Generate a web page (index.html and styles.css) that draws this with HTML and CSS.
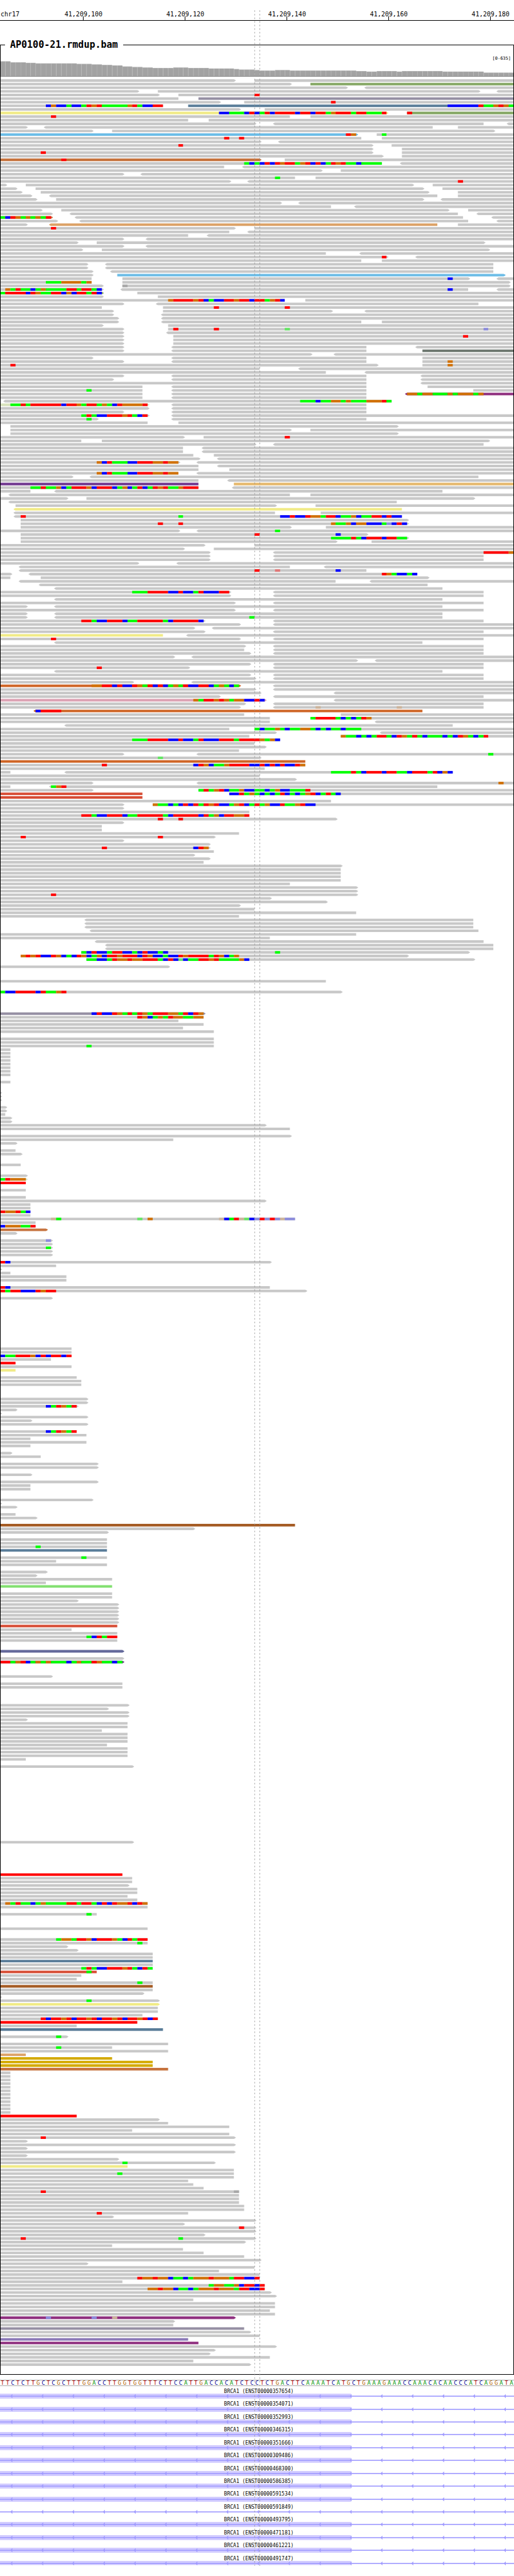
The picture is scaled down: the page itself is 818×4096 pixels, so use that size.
FILE: index.html
```html
<!DOCTYPE html>
<html lang="en">
<head>
<meta charset="utf-8">
<meta name="viewport" content="width=device-width, initial-scale=1">
<title>AP0100-21.rmdup.bam – chr17</title>
<link rel="stylesheet" href="styles.css">
</head>
<body>
<main class="browser">
  <header class="ruler">
    <span class="ruler-chrom">chr17</span>
    <span class="ruler-tick">41,209,100</span>
    <span class="ruler-tick">41,209,120</span>
    <span class="ruler-tick">41,209,140</span>
    <span class="ruler-tick">41,209,160</span>
    <span class="ruler-tick">41,209,180</span>
  </header>

  <fieldset class="track">
    <legend class="track-title">AP0100-21.rmdup.bam</legend>
    <div class="track-range">[0-635]</div>
    <svg class="track-plot" id="plot" viewBox="1 118.5 998 4494.5" preserveAspectRatio="none" role="img" aria-label="Coverage and aligned reads"></svg>
  </fieldset>

  <div class="sequence" id="sequence"></div>
  <section class="genes" id="genes"></section>

  <svg class="guides" viewBox="0 0 1000 5005" preserveAspectRatio="none" aria-hidden="true">
    <path d="M495.5 20V4985M505.5 20V4985" stroke="#969696" stroke-width="1" stroke-dasharray="3 4"/>
  </svg>
</main>
<script src="tracks.js"></script>
</body>
</html>
```

FILE: styles.css
```css
* {
  box-sizing: border-box;
}

body {
  margin: 0;
  background: #fff;
  color: #000;
  font-family: "DejaVu Sans Mono", monospace;
}

.browser {
  position: relative;
  padding-bottom: 13px;
  overflow: hidden;
}

.ruler {
  display: grid;
  grid-template-columns: 6.35% repeat(5, 19.8%);
  padding-top: 16px;
  overflow: hidden;
  border-bottom: 1px solid #000;
  font-size: 10px;
  line-height: 13px;
}

.ruler-chrom {
  padding-left: 1px;
}

.ruler-tick {
  text-align: center;
}

.ruler-tick::after {
  content: "";
  display: block;
  width: 1px;
  height: 6px;
  margin: -3px auto 0;
  background: #000;
}

.track {
  min-width: 0;
  margin: 28px 0 0;
  padding: 0;
  border: 1px solid #000;
}

.track-title {
  margin-left: 7px;
  padding: 0 8px;
  font-size: 15px;
  font-weight: bold;
  line-height: 20px;
}

.track-range {
  padding: 8px 4px 0 0;
  font-size: 7px;
  line-height: 8px;
  text-align: right;
}

.track-plot {
  display: block;
  width: 100%;
  aspect-ratio: 816 / 3678;
}

.sequence {
  display: grid;
  grid-template-columns: repeat(101, 1fr);
  margin-top: 8px;
  border-top: 1px solid #aaa;
  border-bottom: 1px solid #aaa;
  font-size: 9px;
  line-height: 8px;
  text-align: center;
}

.base-a { color: #009600; }
.base-c { color: #000096; }
.base-g { color: #b46400; }
.base-t { color: #b40000; }

.genes {
  display: grid;
  grid-auto-rows: minmax(0, 1fr);
  aspect-ratio: 818 / 286;
  margin-top: 3px;
}

.gene {
  display: grid;
  grid-template-rows: minmax(0, 9fr) minmax(0, 8fr) minmax(0, 3fr);
  min-width: 0;
}

.gene-name {
  padding-left: 6px;
  font-size: 8px;
  line-height: 11px;
  text-align: center;
}

.gene-model {
  display: block;
  width: 100%;
  height: 100%;
}

.guides {
  position: absolute;
  inset: 0;
  width: 100%;
  height: 100%;
  pointer-events: none;
}
```

FILE: tracks.js
```js
const BASE = 9.9;
const NS = "http://www.w3.org/2000/svg";

const READ_COLORS = {
  "": "#c8c8c8", G: "#86a865", P: "#958fa3", S: "#5a7d99", Y: "#f1eb87", L: "#6dbde7",
  C: "#c6733e", O: "#dca267", D: "#6d776f", M: "#8f2f7f", W: "#d9e3bd", V: "#733a91",
  E: "#e6b96e", K: "#cf6526", N: "#dca3b4", R: "#d74d35", F: "#ff0000", B: "#a55c25",
  H: "#82e070", I: "#64699b", U: "#d4aa00", Z: "#8c7ab8"
};
const BASE_COLORS = {
  r: "#ff0000", g: "#00ff00", b: "#0000ff", o: "#d17105",
  h: "#64e664", l: "#8c8cdc", s: "#e07878", t: "#cdb49b", d: "#a8a8a8"
};

// One line per row: row number (or a..b), then reads "start-end" with < or >
// for strand and a colour letter, then called bases "position:letters".
const READS = `
0 0-46> 50-
1 0-57> G61-
2 0-68> <72-
3 0-27> 31-94> <98-
4 0-31> 35- 50:r
5 0-35 P39-
6 0-43> 48- 65:r
7 0-32 S37- 9:bobbgbbgrorgggggorgbbrr 88:bbbbbbrggorog
8 0-47> 52-
9 Y0-76> G80- 43:bbgggbrbgrbrrrrbrrbrrgorrrgrrgggr 80:r
10 0-57 61- 10:r
11 0-37 41-
12 0-50> <54-95 <100-
13 0-5> <9-85 90-
14 0-18> 22-97>
15 L0-70> 74- 68:ro 75:g
16 0-71 75- 44:r 47:r
17 0-51> <55-
18 0-73> 77- 35:r
19 0-73> 79-
20 0-73> 79- 8:r
21 0-75> 79-
22 C0-51> 56- 12:r
23 0-75 <79- 48:gbgbrbrorrgorbrbgrorggbgggg
24 0-44 <48-
25 0-63> 67-
26 0-24> <28-
27 0-58 62- 54:g
28 0-45> <49- 90:r
29 0-1> 5-81> 85-
30 0-3> 7-83> 87-
31 0-4> 8-84> 90-
32 0-6> <10-86 90-
33 0-7> 11-83> <87-
34 0-55> <59-
35 0-65 <70-
36 0-8> 12-88> 92-
37 0-10> <14-90 <94-
38 C0-10> <15-91 <97- 0:gbrogogogr
39 0-11> <16-92 <98-
40 0-5> O<10-86 90-
41 0-46> 50- 10:r
42 0-45 <49-
43 0-37 <41-
44 0-24> <29-
45 0-15> 19-95>
46 0-24> <29-
47 0-16> 20-96>
48 0-64 <71-
49 0-76> <82- 75:r
50 0-71 75-
51..52 0-17> <21-97
53 0-18> <22-97
54 0-18> L23-99>
55 0-18 24-92> <98- 88:b
56 0-18 24-100> 9:gggoooogo
57 0-20> 24-100> 24:d
58 0-20> <24-92 <98- 1:ogrggbgoggggrrgrrgb 88:b
59 G0-20> 27- 0:grrrrbroggrrbobrrgrb
60 0-20> 31-
61 0-56 60- 33:orrrrorbgbbrrorrbrrgorb
62 0-24> <31-94
63 0-20 32- 42:r 56:r
64 0-22> 32-65> <72-
65 0-22> <32-
66 0-23> <32-
67 0-23> <32-71 75-
68 0-20> 33-
69 0-24> 33- 34:r 42:r 56:h 95:l
70 0-24> <33-
71 0-24> 34- 91:r
72..73 0-24> 34-
74 0-24> <34-72 <82-
75 0-24> <34-72 D83-
76 0-61> <66-
77 0-18> <34-72 83-
78 0-24> <34-72 83- 88:o
79 0-74> 83- 2:r 88:o
80 0-51 <59-
81 0-64 <72-
82 0-24> <34-72 <83-
83 0-22> <34-72 <83-
84 0-72 <83-
85 0-28 <34-72 84-
86 0-28 <34-72 93- 17:g
87 0-28 <34-72 M<80- 80:oogoogggogooogo
88 0-28 <34-72
89 <1-77 59:gggbggoogogggooorg
90 W0-29> <34-72 2:ggrgrrrrrrbrrogrrgogbroooor
91 0-29> <34-72
92 0-24> <34-72
93 0-29> <34- 16:grgbbrrrorgbr
94 0-19> <34-72 17:g
95 0-29 35-
96 2-78>
97 2-57> 61-
98 2-78>
99 0-36> 40- 56:r
100 0-16 20-96>
101 0-50> <54-95
102..103 0-36 <40-
104 0-38 42-
105 0-39> <43-
106 0-35> <39- 19:obrgggbbrrrooroo
107 0-39 <43-
108 0-39 45-
109 0-35 <39- 19:obrgggbbrrrooroo
110 0-14> <18-94
111 0-39 <45-
112 V0-39 E46-
113 0-39 <46- 6:ggrggobgrrrobrrrbgobgrbgrorggorrr
114 0-6 <11-87
115 <2-57 61-
116 0-13> 17-93>
117 <2-78
118 3-54> 62-
119 Y<3-79
120 <3-54 63-
121 <3-79 4:r 35:g 55:bbrbbroogrrbggobggrrbrbb
122 4-80>
123 4-80> 31:r 35:r 65:oggoboobbbglbrb
124 4-57> 64-
125 0-35> <39- 54:g
126 4-72> 50:r 66:b
127 4-80> 65:ggggrgbrrrbrrgg
128 4-66> 73-
129 0-40> 50-
130 0-36> 42-
131 0-41> <54- 95:rrrrro
132..133 0-41> <54-95
134 0-27> <35-
135 <4-57 <64-
136 <4-72 50:r 54:s 66:b
137 0-2> <6-82 75:rogbbgb
138 0-2 8-84>
139 <4-66 <73-
140 <8-84
141 <11-87
142 0-45> <54-95 26:gggrrrrbbrbbgrbbbrr
143 0-45> <54-95
144 <11-87
145 0-46> <54-95
146 0-5> <11-87
147 0-46> <54-95
148 0-5> <11-87
149 0-5> <11-87 49:g
150 0-40> <54-95 16:rrgbbrrrbggrrrrrgbrrrrrb
151 0-47> <54-
152 0-38> <42-
153 0-40> <54-95
154 Y0-32 <37-
155 0-47> <54-95 10:r
156 <11-83
157 0-48> <54-95
158 0-48 <54-95
159 0-49> <54-95
160 0-34> <38-
161 0-70> <74-
162 0-49> <54-95
163 0-37> <54-95 19:r
164 <11-87
165 0-49> <54-95
166 0-50> <54-95
167 0-26> <38-
168 K0-47> <54- 18:oorrbrbbrogrbrbgogrbbrrbgogbg
169 0-50> <54-
170 0-51> <66-
171 0-43> <54-95
172 N0-52> <66- 38:ogrrorogoobbrb
173 0-48> <54-95
174 0-47> <54-95 62:t 78:t
175 K<7-83 7:brrrr
176 0-48 67-
177 0-53 61- 61:grrrrgbgbgro
178 0-53 <74-
179 <13-89
180 0-45 50- 50:gbggogbggoogbgbggbggg
181 0-54> <75-
182 0-49 67- 67:oggbgbgrrgbrogrgbgggbgbrogbgr
183 0-55 26:gggrrrrbbrbbgrbbbrrrgrrrrogob
184 0-50
185 0-52>
186 0-47
187 0-24> <39- 96:g
188 0-51> 31:h
189 K0-60
190 0-60 20:r 38:brobggorrrrbbrbrbrbbro
191 0-52
192 0-2 <13-89 65:ggggrgbrrrbrrggbrrrgrbob
193 0-51
194 0-58>
195 0-18> <39- 98:o
196 0-2 <10-86 10:gor
197 0-18> 39- 39:grgorbggobbggbgobbgggr
198 R0-28 45- 45:bbrgogbgbgrbgbgorbgrgb
199 R0-28
200 0-65
201 0-24> 30- 30:oggbgbrbrgrorbbgorbgrgobbrggorbb
202 0-24>
203 0-49
204 0-49 16:rrgbbrrrbggrrrrrgbrrrrrbrgobrroor
205 0-66> 31:r 35:r
206 0-24>
207..208 0-20
209 0-47
210 0-42> 4:r 31:r
211 0-24>
212 0-41>
213 0-41> 20:r 38:bro
214 0-42
215 0-38>
216 0-41>
217 0-40
218 0-67>
219..222 0-67
223 0-57
224..225 0-70>
226 0-70> 10:r
227 0-53>
228 0-64>
229 0-47>
230 0-50
231 0-70
232 0-47
233..235 <17-93
236 <18-94
237 0-70
238 0-53
239 <19-95
240..241 <21-97
242 16-92> 16:gbrbbgrrbbgbrbbgb 54:g
243 4-80> 4:ororbbrobgbrobgobrrorrrbrobbgbbrorrrrgrobgo
244 17-93> 17:ggbbgrooroorrrgbrbhbggrrorggggob
246 0-33>
250 0-64
253 0-67> 0:gbbrrrrbrggor
259 P0-40> 18:brbbrogrgrogrrroogrbro
260 0-40 27:robgogrooggoo
261 0-35
262 0-40
263 0-36
264 0-42
266..267 0-42
268 0-42 17:g
269..276 0-2
278 0-2
281..283 0-0>
285..286 0-1>
287 0-1
288..289 0-2>
290 0-52>
291 0-57
293 0-57>
294 0-34
295 0-3>
297 0-3
298 0-4>
301 0-4
304 0-5>
305 W0-5> 0:grooo
306 F0-5
308 0-5
310 0-5
311 0-52>
312..313 0-6
314 0-6 0:roorgb
315 0-6
316 0-58 10:tg 27:h 29:o 43:tbgrthblrlrltll
317 0-7
318 0-7 0:boooggr
319 C0-9>
320 0-3>
322 0-10> 9:l
323 0-10>
324 0-10> 9:g
325..326 0-10>
328 0-53> 0:rb
329 0-11
330 0-0>
331 0-2
332..333 0-13
335 0-53 0:rb
336 0-60> 0:rgrrbbbrorr
338 0-10>
352..353 0-14
354 0-14 0:bggrrrobrbrrbr
355 0-10
356 F0-3
357 0-14
358 Y0-3
360 0-15
361..362 0-16
366..367 0-17>
368 0-15> 9:bgrogr
369 0-3>
370 0-0>
371 0-17>
372 0-6>
373 0-17>
375 0-15 9:bgrogr
376 0-17
377 0-6
378 0-17
379 0-6
381 0-2>
382 0-8
384..385 0-19>
387 0-6>
389 0-19>
390..391 0-6
394 0-18>
395 0-0>
396 0-3>
398 0-3
399 0-7>
401 B0-58
402 0-38>
403 0-21>
405..406 0-21
407 0-21 7:g
408 S0-21
410 0-21 16:g
411 0-11
412 0-21
414 0-9>
415 0-7>
416 0-22
417 0-9
418 H0-22
420..421 0-22
422 0-15>
423..428 0-23>
429 R0-23
430 0-14
431 0-23
432 0-23 17:gbrgrr
433 0-23
436 I0-24>
438 0-24>
439 V0-24> 0:rrgorbgogogggbgoggroggbg
443 0-10>
445..446 0-24
451 0-25>
452 0-21>
453..454 0-25>
455 0-5>
456..457 0-25
458 0-20
459..461 0-25
462 0-21
463..465 0-25
466 0-5
468 0-26>
489 0-26>
498 F0-24
499..500 0-26
501 0-25>
502..503 0-27
504 0-25
505 0-27
506 0-29 1:ogrggbgoggggrrgrrgbrbroorbro
507 0-29
509 0-19 17:g
513 0-29
516 0-29 11:googrrobrrrogbrgrr
517 0-29 27:g
518 0-13>
519 0-15>
520..521 0-30
522 S0-30
523 0-30
524 0-30 16:grgbbrrrorgbrg
525 R0-19 17:g
526 0-16
527 0-15
528 0-30 27:g
529 B0-30
530 0-30
531 0-28>
532 0-0>
533 0-31> 17:g
534 Y0-31>
535..536 0-31
537 0-28
538 0-31 8:rbrrorbrrorbrrorbrrorbr
539 F0-27
540 0-15
541 S0-32
543 0-13> 11:g
545 0-33
546 0-22 11:g
547 0-33
548 O0-5
549 U0-22
550..551 U0-30
552 C0-33
553..564 0-2
565 F0-15
566 0-31>
567 0-33
568 0-45
569 0-26
570 0-45
571 0-46> 8:r
572 0-5>
573 0-46>
574 0-5>
575 0-46>
576 0-5>
577 0-23>
578 0-42> 24:g
579 Y0-25
580 0-46
581 0-46 23:g
582 0-46
583 0-37
584 0-38
585 0-40
586 0-47 8:r 46:d
587..589 0-47
590..591 0-48
592 0-37 19:r
593 0-22>
594 0-50>
595 0-36>
596 0-50> 47:r
597 0-50>
598 0-40>
599 0-50> 4:r 35:g
600 0-48>
601 0-22
602 0-36
603 0-40
604 0-48
605 0-51>
606 0-17>
607 0-50
608 0-43
609 0-51
610 0-51 27:rooroobggbgooorooogrrbbr
611 0-24
612 0-52 41:googgobrrbr
613 0-52 29:ooroobggbgooorooogrrbbr
614 0-53>
615 0-54>
616 0-38
617..618 0-54
619 0-53
620 0-54
621 M0-46> 9:l 18:l 22:t
622 0-34>
623 0-34
624 P0-48
625 0-49>
626 0-51
627 Z0-37
628 M0-39
629 0-54>
630 0-42>
631 0-41>
632 0-53
633 0-38
634 0-49>`;

// Coverage as [number of bases, top of the bar].
const COVERAGE = [
  [2, 119], [3, 121], [2, 122], [8, 123], [3, 124], [2, 125], [2, 126], [2, 127],
  [2, 129], [2, 130], [2, 131], [4, 132], [3, 131], [4, 132], [5, 133], [1, 134],
  [3, 135], [1, 136], [3, 137], [3, 136], [13, 137], [2, 138], [2, 139], [4, 138],
  [1, 139], [8, 138], [8, 139], [6, 141]
];

const SEQUENCE =
  "TTCTCTTGCTCGCTTTGGACCTTGGTGGTTTCTTCCATTGACCACATCTCCTCTGACTTC" +
  "AAAATCATGCTGAAAGAAACCAAACACAACCCATCAGGATA";

const TRANSCRIPTS = [
  "357654", "354071", "352993", "346315", "351666", "309486", "468300",
  "586385", "591534", "591849", "493795", "471181", "461221", "491747"
];

function add(parent, tag, attrs) {
  const el = document.createElementNS(NS, tag);
  for (const name in attrs) el.setAttribute(name, attrs[name]);
  parent.appendChild(el);
  return el;
}

const px = (base) => Math.round(base * BASE);

function drawCoverage(plot) {
  let base = 0;
  for (const [count, top] of COVERAGE) {
    for (let i = 0; i < count; i++, base++) {
      const x = px(base);
      const w = px(base + 1) - x;
      add(plot, "rect", { x: x, y: top, width: w, height: 148 - top, fill: "#b0b0b0" });
      add(plot, "rect", { x: x + 1, y: top + 1, width: w - 1, height: 147 - top, fill: "#a2a2a2" });
    }
  }
  add(plot, "rect", { x: 0, y: 148, width: 1000, height: 1, fill: "#757575" });
}

function drawRead(plot, y, color, left, start, end, right) {
  const x0 = px(start);
  const x1 = px(end);
  let d = `M${x0} ${y}H${x1}`;
  d += right ? `l2 1l2 1.5l-2 1.5l-2 1` : `v5`;
  d += `H${x0}`;
  d += left ? `l-2 -1l-2 -1.5l2 -1.5z` : `z`;
  add(plot, "path", { d: d, fill: color });
}

function drawBases(plot, y, start, letters) {
  for (const run of letters.match(/(.)\1*/g)) {
    const x = px(start);
    start += run.length;
    add(plot, "rect", { x: x, y: y, width: px(start) - x, height: 5, fill: BASE_COLORS[run[0]] });
  }
}

function drawReads(plot) {
  for (const line of READS.trim().split("\n")) {
    const [rows, ...items] = line.split(" ");
    const [first, last = first] = rows.split("..").map(Number);
    for (let row = first; row <= last; row++) {
      const y = 154 + row * 7;
      for (const item of items) {
        const read = item.match(/^([A-Z]?)(<?)(\d+)-(\d*)(>?)$/);
        if (read) {
          drawRead(plot, y, READ_COLORS[read[1]], read[2], +read[3], read[4] ? +read[4] : 101, read[5]);
        } else {
          const [start, letters] = item.split(":");
          drawBases(plot, y, +start, letters);
        }
      }
    }
  }
}

function drawSequence(box) {
  for (const letter of SEQUENCE) {
    const span = document.createElement("span");
    span.className = "base-" + letter.toLowerCase();
    span.textContent = letter;
    box.appendChild(span);
  }
}

function drawGenes(box) {
  TRANSCRIPTS.forEach((id, index) => {
    const gene = document.createElement("div");
    gene.className = "gene";
    const name = document.createElement("span");
    name.className = "gene-name";
    name.textContent = `BRCA1 (ENST00000${id})`;
    gene.appendChild(name);
    const model = add(gene, "svg", {
      class: "gene-model", viewBox: "0 0 1000 10", preserveAspectRatio: "none", "aria-hidden": "true"
    });
    if (id !== "591849") {
      const height = index === TRANSCRIPTS.length - 1 ? 8 : 10;
      add(model, "rect", { x: 0, y: 0, width: 683, height: height, fill: "#d2ccff" });
    }
    add(model, "rect", { x: 0, y: 4, width: 1000, height: 2, fill: "#a09bff" });
    let arrows = "";
    for (let x = 20; x < 1000; x += 60) arrows += `M${x} 5l4 -4v8z`;
    add(model, "path", { d: arrows, fill: "#a09bff" });
    box.appendChild(gene);
  });
}

const plot = document.getElementById("plot");
drawCoverage(plot);
drawReads(plot);
drawSequence(document.getElementById("sequence"));
drawGenes(document.getElementById("genes"));
```
